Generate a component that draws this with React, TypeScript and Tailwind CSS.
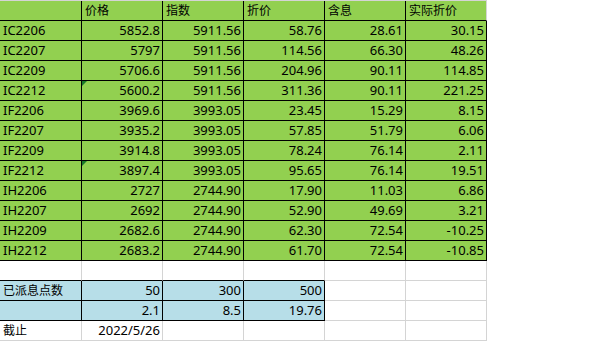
const GREEN = 'bg-[#92d050]';
const BLUE = 'bg-[#b7dee8]';

type Row = { cells: string[]; mark?: boolean };

const header = ['', '价格', '指数', '折价', '含息', '实际折价'];

const rows: Row[] = [
  { cells: ['IC2206', '5852.8', '5911.56', '58.76', '28.61', '30.15'] },
  { cells: ['IC2207', '5797', '5911.56', '114.56', '66.30', '48.26'] },
  { cells: ['IC2209', '5706.6', '5911.56', '204.96', '90.11', '114.85'] },
  { cells: ['IC2212', '5600.2', '5911.56', '311.36', '90.11', '221.25'], mark: true },
  { cells: ['IF2206', '3969.6', '3993.05', '23.45', '15.29', '8.15'] },
  { cells: ['IF2207', '3935.2', '3993.05', '57.85', '51.79', '6.06'] },
  { cells: ['IF2209', '3914.8', '3993.05', '78.24', '76.14', '2.11'] },
  { cells: ['IF2212', '3897.4', '3993.05', '95.65', '76.14', '19.51'], mark: true },
  { cells: ['IH2206', '2727', '2744.90', '17.90', '11.03', '6.86'] },
  { cells: ['IH2207', '2692', '2744.90', '52.90', '49.69', '3.21'] },
  { cells: ['IH2209', '2682.6', '2744.90', '62.30', '72.54', '-10.25'] },
  { cells: ['IH2212', '2683.2', '2744.90', '61.70', '72.54', '-10.85'] },
];

const dividend = [
  ['已派息点数', '50', '300', '500'],
  ['', '2.1', '8.5', '19.76'],
];

function Cell({
  i,
  text,
  right,
  className,
  mark,
}: {
  i: number;
  text?: string;
  right?: boolean;
  className: string;
  mark?: boolean;
}) {
  // chinese labels render a touch smaller than the digits
  const cjk = !!text && /[\u4e00-\u9fff]/.test(text);
  return (
    <div
      className={`relative flex h-[20px] shrink-0 items-center border-r border-b px-[2px] ${
        i === 0 ? 'w-[82px]' : 'w-[81px]'
      } ${right ? 'justify-end' : 'justify-start pl-[3px]'} ${className}`}
    >
      {mark && (
        <span className="absolute left-0 top-0 h-0 w-0 border-t-[5px] border-r-[5px] border-t-[#1b7a2a] border-r-transparent" />
      )}
      <span className={`whitespace-nowrap leading-[19px] ${cjk ? 'text-[12px]' : ''}`}>{text}</span>
    </div>
  );
}

export default function App() {
  return (
    <div
      className="h-[341px] w-[600px] overflow-hidden bg-white text-[13px] text-black"
      style={{ fontFamily: '"Noto Sans", "Noto Sans CJK SC", sans-serif' }}
    >
      <div className="w-[487px] border-t border-[#d4d4d4]">
        {/* header */}
        <div className="flex">
          {header.map((h, i) => (
            <Cell
              key={i}
              i={i}
              text={h}
              className={`${GREEN} border-b-black ${i === 5 ? 'border-r-[#d4d4d4]' : 'border-r-black'}`}
            />
          ))}
        </div>

        {rows.map((r) => (
          <div key={r.cells[0]} className="flex">
            {r.cells.map((c, i) => (
              <Cell
                key={i}
                i={i}
                text={c}
                right={i > 0}
                mark={r.mark && i === 1}
                className={`${GREEN} border-black`}
              />
            ))}
          </div>
        ))}

        {/* blank row */}
        <div className="flex">
          {[0, 1, 2, 3, 4, 5].map((i) => (
            <Cell
              key={i}
              i={i}
              className={`border-r-[#d4d4d4] ${i < 4 ? 'border-b-black' : 'border-b-[#d4d4d4]'}`}
            />
          ))}
        </div>

        {dividend.map((r, ri) => (
          <div key={ri} className="flex">
            {r.map((c, i) => (
              <Cell key={i} i={i} text={c} right={i > 0} className={`${BLUE} border-black`} />
            ))}
            <Cell i={4} className="border-[#d4d4d4]" />
            <Cell i={5} className="border-[#d4d4d4]" />
          </div>
        ))}

        <div className="flex">
          <Cell i={0} text="截止" className="border-[#d4d4d4]" />
          <Cell i={1} text="2022/5/26" right className="border-[#d4d4d4]" />
          {[2, 3, 4, 5].map((i) => (
            <Cell key={i} i={i} className="border-[#d4d4d4]" />
          ))}
        </div>
      </div>
    </div>
  );
}
